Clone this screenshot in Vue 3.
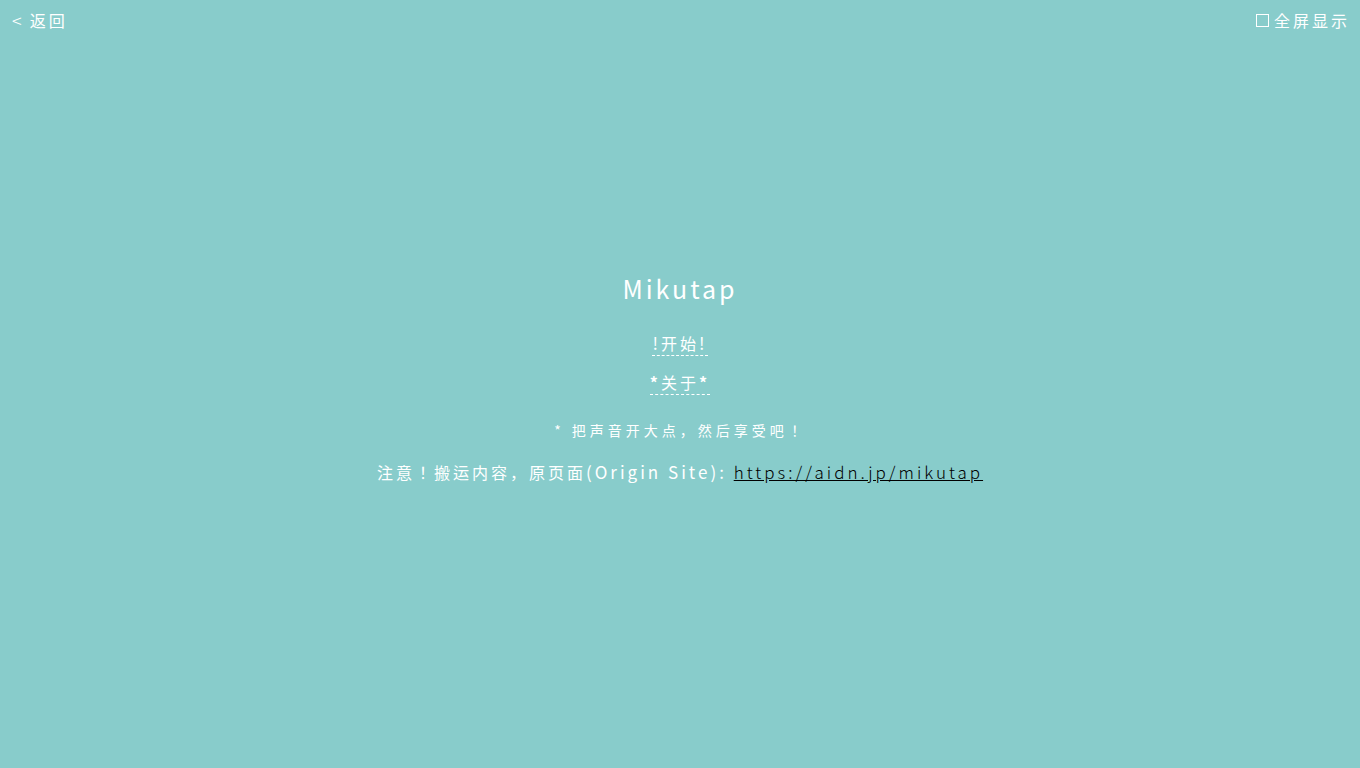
<script setup>
const origin = 'https://aidn.jp/mikutap'
</script>

<template>
  <div class="page">
    <header class="bar">
      <a class="plain back" href="#back"><span class="arrow">&lt;</span><span>返回</span></a>
      <button class="plain full" type="button"><svg class="box" viewBox="0 0 14 14" aria-hidden="true"><rect x="0.5" y="1.5" width="12" height="12" /></svg>全屏显示</button>
    </header>
    <main class="main">
      <h1>Mikutap</h1>
      <button class="action" type="button"><span class="mark">!</span>开始<span class="mark">!</span></button>
      <button class="action about" type="button"><span class="star">*</span>关于<span class="star">*</span></button>
      <p class="hint">* 把声音开大点，然后享受吧！</p>
      <p class="notice">注意！搬运内容，原页面<span class="latin">(Origin Site): <a :href="origin">{{ origin }}</a></span></p>
    </main>
  </div>
</template>

<style>
body {
  background: #88cccb;
}
</style>

<style scoped>
.page {
  min-height: 100vh;
  display: flex;
  flex-direction: column;
  color: #fff;
  font-family: "Noto Sans CJK JP", "Noto Sans CJK SC", sans-serif;
  font-size: 16px;
  letter-spacing: 3px;
}
.bar {
  display: flex;
  justify-content: space-between;
  padding: 9px 10px 0 12px;
  line-height: 22px;
}
button,
.plain {
  font: inherit;
  letter-spacing: inherit;
  color: inherit;
  background: none;
  border: 0;
  padding: 0;
  text-decoration: none;
  cursor: pointer;
}
.back {
  display: flex;
  gap: 5px;
}
.arrow {
  font-size: 18px;
  font-weight: 300;
}
.full {
  display: flex;
  align-items: center;
  gap: 4px;
}
.box {
  width: 14px;
  height: 14px;
  fill: none;
  stroke: #fff;
}
.main {
  flex: 1;
  display: flex;
  flex-direction: column;
  align-items: center;
  justify-content: center;
  padding-bottom: 43px;
}
h1 {
  margin: 0 0 30px;
  font-size: 25px;
  line-height: 30px;
  font-weight: 400;
  letter-spacing: 3px;
}
button.action {
  line-height: 20px;
  padding-bottom: 2px;
  border-bottom: 1px dashed #fff;
  margin-bottom: 16px;
}
button.about {
  font-family: "Noto Sans CJK SC", sans-serif;
}
.mark {
  font-size: 17px;
  line-height: 1;
}
.star {
  font-weight: 700;
}
.hint {
  margin: 8px 0 19px;
  font-size: 14px;
  letter-spacing: 4px;
  line-height: 22px;
}
.notice {
  margin: 0;
  line-height: 24px;
}
.latin {
  font-size: 17px;
  line-height: 1;
}
.notice a {
  color: #000;
  font-weight: 300;
}
</style>
